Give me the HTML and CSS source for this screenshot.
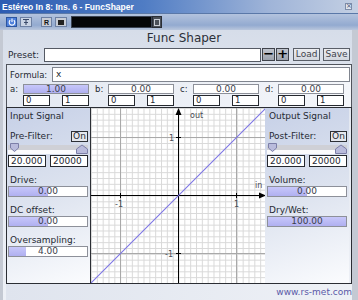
FILE: index.html
```html
<!DOCTYPE html>
<html lang="es">
<head>
    <meta charset="UTF-8">
    <title>FuncShaper</title>
    <link rel="stylesheet" href="styles.css">
</head>
<body>
<div class="window">
    <div class="titlebar">
        <span class="title">Estéreo In 8: Ins. 6 - FuncShaper</span>
        <span class="close">×</span>
    </div>
    <div class="toolbar">
        <span class="tb-btn tb-power">
            <svg width="8" height="8" viewBox="0 0 8 8"><path d="M2.2 2.2A2.8 2.8 0 1 0 5.8 2.2" fill="none" stroke="#fff" stroke-width="1.1"/><path d="M4 0.5V4" stroke="#fff" stroke-width="1.1"/></svg>
        </span>
        <span class="tb-btn tb-bypass">
            <svg width="8" height="8" viewBox="0 0 8 8"><path d="M1 1.5H7M4 1.5V7M2 4.5H6" stroke="#3a4a6a" stroke-width="1.1" fill="none"/></svg>
        </span>
        <span class="tb-btn tb-rec">R</span>
        <span class="tb-btn tb-edit"><i class="tb-square"></i></span>
        <span class="tb-display"></span>
        <span class="tb-btn tb-save"><i class="tb-disk"></i></span>
    </div>

    <div class="main">
        <div class="header">Func Shaper</div>

        <div class="preset-row">
            <span class="preset-label">Preset:</span>
            <div class="preset-field"></div>
            <span class="step-btn">−</span>
            <span class="step-btn">+</span>
            <span class="text-btn load">Load</span>
            <span class="text-btn">Save</span>
        </div>

        <div class="params">
            <div class="formula-row">
                <span class="formula-label">Formula:</span>
                <div class="formula-field">x</div>
            </div>
            <div class="coef-row">
                <div class="coef">
                    <span class="coef-name">a:</span>
                    <div class="coef-ctrl">
                        <div class="slider"><div class="slider-fill" style="width:100%"></div><span class="slider-val">1.00</span></div>
                        <div class="limits"><span class="box">0</span><span class="box">1</span></div>
                    </div>
                </div>
                <div class="coef">
                    <span class="coef-name">b:</span>
                    <div class="coef-ctrl">
                        <div class="slider"><span class="slider-val">0.00</span></div>
                        <div class="limits"><span class="box">0</span><span class="box">1</span></div>
                    </div>
                </div>
                <div class="coef">
                    <span class="coef-name">c:</span>
                    <div class="coef-ctrl">
                        <div class="slider"><span class="slider-val">0.00</span></div>
                        <div class="limits"><span class="box">0</span><span class="box">1</span></div>
                    </div>
                </div>
                <div class="coef">
                    <span class="coef-name">d:</span>
                    <div class="coef-ctrl">
                        <div class="slider"><span class="slider-val">0.00</span></div>
                        <div class="limits"><span class="box">0</span><span class="box">1</span></div>
                    </div>
                </div>
            </div>
        </div>

        <div class="content">
            <div class="panel panel-in">
                <div class="panel-title">Input Signal</div>
                <div class="filter-row"><span>Pre-Filter:</span><span class="toggle">On</span></div>
                <div class="range-slider">
                    <svg width="80" height="11" viewBox="0 0 80 11">
                        <rect x="0" y="2" width="80" height="5" fill="#cfd0d6"/>
                        <rect x="0" y="7" width="80" height="4" fill="#fbfbfd"/>
                        <path d="M2.5 0.5H10.5V5L6.5 8.5L2.5 5Z" fill="#b9bbdc" stroke="#7c7fa8"/>
                        <path d="M68.5 10.5H79.5V6L74 2L68.5 6Z" fill="#b9bbdc" stroke="#7c7fa8"/>
                    </svg>
                </div>
                <div class="freq-row"><span class="box freq">20.000</span><span class="box freq">20000</span></div>
                <div class="param">
                    <div class="param-label">Drive:</div>
                    <div class="slider big"><div class="slider-fill" style="width:50%"></div><span class="slider-val">0.00</span></div>
                </div>
                <div class="param">
                    <div class="param-label">DC offset:</div>
                    <div class="slider big"><div class="slider-fill" style="width:50%"></div><span class="slider-val">0.00</span></div>
                </div>
                <div class="param">
                    <div class="param-label">Oversampling:</div>
                    <div class="slider big"><div class="slider-fill" style="width:22%"></div><span class="slider-val">4.00</span></div>
                </div>
            </div>

            <div class="plot">
                <svg width="175" height="175" viewBox="0 0 175 175">
                    <defs>
                        <pattern id="fine" width="5.8333" height="5.8333" patternUnits="userSpaceOnUse">
                            <path d="M0 0.5H5.8333M0.5 0V5.8333" stroke="#d9d9d9" stroke-width="1" fill="none"/>
                        </pattern>
                    </defs>
                    <rect width="175" height="175" fill="#fff"/>
                    <rect width="175" height="175" fill="url(#fine)"/>
                    <!-- unit lines at -1 and 1 -->
                    <path d="M29.5 0V175M145.5 0V175M0 29.5H175M0 145.5H175" stroke="#a9a9a9" stroke-width="1"/>
                    <!-- axes -->
                    <path d="M0 87.5H171M87.5 175V4" stroke="#000" stroke-width="1"/>
                    <path d="M175 87.5L168 84.5V90.5Z" fill="#000"/>
                    <path d="M87.5 0L84.5 7H90.5Z" fill="#000"/>
                    <path d="M29.5 85V90M145.5 85V90M85 29.5H90M85 145.5H90" stroke="#000" stroke-width="1"/>
                    <g class="plot-text">
                        <text x="99" y="10">out</text>
                        <text x="164" y="80">in</text>
                        <text x="78" y="33">1</text>
                        <text x="74" y="149">-1</text>
                        <text x="24" y="99">-1</text>
                        <text x="143" y="99">1</text>
                    </g>
                    <!-- transfer curve y = x -->
                    <path d="M0 175L175 0" stroke="#7c74e4" stroke-width="1.1"/>
                </svg>
            </div>

            <div class="panel panel-out">
                <div class="panel-title">Output Signal</div>
                <div class="filter-row"><span>Post-Filter:</span><span class="toggle">On</span></div>
                <div class="range-slider">
                    <svg width="80" height="11" viewBox="0 0 80 11">
                        <rect x="0" y="2" width="80" height="5" fill="#cfd0d6"/>
                        <rect x="0" y="7" width="80" height="4" fill="#fbfbfd"/>
                        <path d="M1.5 0.5H9.5V5L5.5 8.5L1.5 5Z" fill="#b9bbdc" stroke="#7c7fa8"/>
                        <path d="M68.5 10.5H79.5V6L74 2L68.5 6Z" fill="#b9bbdc" stroke="#7c7fa8"/>
                    </svg>
                </div>
                <div class="freq-row"><span class="box freq">20.000</span><span class="box freq">20000</span></div>
                <div class="param">
                    <div class="param-label">Volume:</div>
                    <div class="slider big"><div class="slider-fill" style="width:50%"></div><span class="slider-val">0.00</span></div>
                </div>
                <div class="param">
                    <div class="param-label">Dry/Wet:</div>
                    <div class="slider big"><div class="slider-fill" style="width:100%"></div><span class="slider-val">100.00</span></div>
                </div>
            </div>
        </div>

        <div class="footer">www.rs-met.com</div>
    </div>
</div>
</body>
</html>
```

FILE: styles.css
```css
*{
 box-sizing: border-box;
}
body{
 margin: 0;
 width: 358px;
 height: 300px;
 overflow: hidden;
 font-family: "DejaVu Sans", Verdana, sans-serif;
 font-size: 9px;
 color: #262a33;
 background: #c4c9d3;
}
.window{
 display: flex;
 flex-direction: column;
 height: 300px;
}

/* host window bars */
.titlebar{
 height: 14px;
 display: flex;
 align-items: center;
 justify-content: space-between;
 padding: 0 6px 0 2px;
 background: linear-gradient(to right, #2d5cb2 0%, #4f7cc4 40%, #9fb4d8 75%, #c3cfe3 100%);
 border-bottom: 1px solid #5a78a8;
}
.title{
 font-family: "Liberation Sans", Arial, sans-serif;
 font-weight: bold;
 font-size: 8.5px;
 color: #fff;
}
.close{
 width: 7px;
 height: 7px;
 border: 1px solid #7d8ca8;
 background: #dfe5ef;
 color: #405070;
 font-size: 7px;
 line-height: 5px;
 text-align: center;
}
.toolbar{
 height: 16px;
 display: flex;
 align-items: center;
 padding-left: 6px;
 background: linear-gradient(#b3c3de, #93aad0 70%, #b9c6dc);
}
.tb-btn{
 height: 10px;
 width: 11px;
 margin-right: 3px;
 display: flex;
 align-items: center;
 justify-content: center;
 border: 1px solid #6d80a3;
 background: #c9d3e4;
 font-family: "Liberation Sans", Arial, sans-serif;
 font-weight: bold;
 font-size: 7px;
 color: #111;
}
.tb-power{
 background: #4e80dc;
 border-color: #2c55a0;
}
.tb-bypass{
 width: 12px;
 margin-right: 9px;
}
.tb-rec{
 background: #c7ccd6;
}
.tb-edit{
 width: 12px;
 margin-right: 4px;
 background: #c7ccd6;
}
.tb-square{
 width: 6px;
 height: 5px;
 background: #222;
}
.tb-display{
 width: 81px;
 height: 12px;
 background: #050608;
 border: 1px solid #3b4353;
}
.tb-save{
 width: 10px;
 height: 12px;
 background: #4a4f58;
 border-color: #2a2e36;
}
.tb-disk{
 width: 6px;
 height: 7px;
 border: 1px solid #c8ccd4;
}

/* plugin body */
.main{
 flex: 1;
 display: flex;
 flex-direction: column;
 border-left: 3px solid #c4c9d3;
 border-right: 6px solid #c4c9d3;
 padding-left: 3px;
 background: linear-gradient(#d6dde9, #e6eaf2 40%, #edf0f6);
}
.header{
 height: 17px;
 line-height: 17px;
 text-align: center;
 font-size: 12px;
 color: #2b2f38;
 padding-left: 10px;
}
.preset-row{
 height: 17px;
 display: flex;
 align-items: flex-start;
 padding: 1px 2px 0 2px;
}
.preset-label{
 width: 36px;
 line-height: 14px;
}
.preset-field{
 width: 218px;
 height: 14px;
 background: #fff;
 border: 1px solid #555a64;
}
.step-btn{
 width: 13px;
 height: 13px;
 margin-left: 1px;
 border: 1px solid #3f434b;
 background: linear-gradient(#c0c5ce, #9da3ae);
 font-size: 13px;
 font-weight: bold;
 line-height: 10px;
 text-align: center;
 color: #000;
}
.text-btn{
 width: 27px;
 height: 13px;
 margin-left: 3px;
 border: 1px solid #5a5f68;
 background: linear-gradient(#eceef2, #d2d6de);
 color: #3f434c;
 line-height: 11px;
 text-align: center;
}
.load{
 margin-left: 4px;
}

.params{
 height: 43px;
 border: 1px solid #50545c;
 border-bottom: none;
 padding: 2px 1px 0 3px;
 background: linear-gradient(to right, #e3e8f1, #f4f6fa);
}
.formula-row{
 display: flex;
 height: 15px;
 align-items: center;
}
.formula-label{
 width: 42px;
 font-size: 8.5px;
}
.formula-field{
 width: 298px;
 height: 15px;
 background: #fff;
 border: 1px solid #80858f;
 padding-left: 3px;
 line-height: 13px;
}
.coef-row{
 display: flex;
 margin-top: 2px;
}
.coef{
 width: 86px;
 display: flex;
}
.coef-name{
 width: 13px;
 line-height: 10px;
 font-size: 8.5px;
}
.coef-ctrl{
 width: 66px;
}
.limits{
 display: flex;
 justify-content: space-between;
 margin-top: 1px;
}
.box{
 display: block;
 height: 11px;
 width: 27px;
 background: #fff;
 border: 1px solid #25282e;
 padding-left: 2px;
 font-size: 8.5px;
 line-height: 9px;
}

/* value sliders */
.slider{
 position: relative;
 height: 10px;
 background: #fff;
 border: 1px solid #8d9099;
}
.slider.big{
 height: 11px;
}
.slider-fill{
 position: absolute;
 left: 0;
 top: 0;
 bottom: 0;
 background: linear-gradient(#c7c7fa, #b0b0f0);
}
.slider-val{
 position: relative;
 display: block;
 text-align: center;
 line-height: 8px;
 color: #3a3e4a;
}
.slider.big .slider-val{
 line-height: 9px;
}

/* content row: filters | plot | output */
.content{
 height: 177px;
 display: flex;
 border: 1px solid #2b2e34;
}
.panel{
 width: 83px;
 padding: 3px 2px 0 1px;
 background: linear-gradient(160deg, #c6d0e7 0%, #dde3ef 50%, #fbfcfe 100%);
}
.panel-out{
 width: 84px;
 padding-left: 2px;
}
.panel-title{
 line-height: 11px;
 padding-left: 2px;
}
.filter-row{
 height: 12px;
 margin-top: 8px;
 display: flex;
 justify-content: space-between;
 align-items: center;
 padding-left: 2px;
}
.toggle{
 width: 17px;
 height: 11px;
 border: 1px solid #2d3036;
 background: #e4e7ed;
 line-height: 9px;
 text-align: center;
}
.range-slider{
 height: 11px;
 margin-top: 1px;
}
.range-slider svg{
 display: block;
}
.freq-row{
 display: flex;
 justify-content: space-between;
 margin-top: 1px;
}
.freq{
 width: 38px;
 height: 12px;
 font-size: 9px;
 line-height: 10px;
}
.param{
 margin-top: 8px;
}
.param-label{
 line-height: 11px;
 padding-left: 2px;
}
.plot{
 width: 175px;
 border-left: 1px solid #2b2e34;
 border-right: 1px solid #2b2e34;
}
.plot svg{
 display: block;
}
.plot-text{
 font-family: "DejaVu Sans", Verdana, sans-serif;
 font-size: 8px;
 fill: #4a4d55;
}

.footer{
 height: 16px;
 line-height: 16px;
 text-align: right;
 color: #5a5aa8;
 font-size: 9px;
 background: linear-gradient(to right, #dfe4ee, #eef1f6);
}
```
